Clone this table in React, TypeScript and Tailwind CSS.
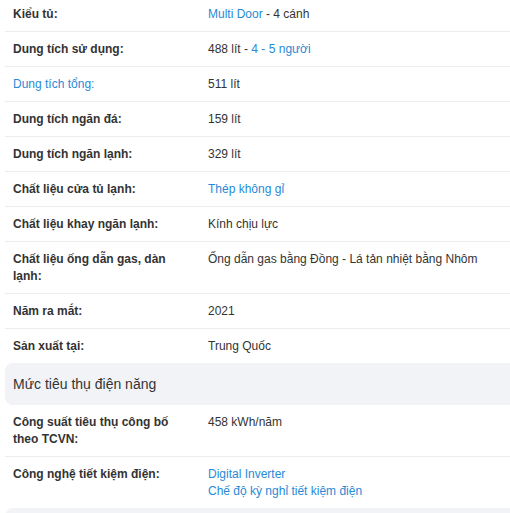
import React from "react";

type Part = { t: string; link?: boolean };
type Row = { label: string; labelLink?: boolean; value: Part[][] };

const rows1: Row[] = [
  { label: "Kiểu tủ:", value: [[{ t: "Multi Door", link: true }, { t: " - 4 cánh" }]] },
  { label: "Dung tích sử dụng:", value: [[{ t: "488 lít - " }, { t: "4 - 5 người", link: true }]] },
  { label: "Dung tích tổng:", labelLink: true, value: [[{ t: "511 lít" }]] },
  { label: "Dung tích ngăn đá:", value: [[{ t: "159 lít" }]] },
  { label: "Dung tích ngăn lạnh:", value: [[{ t: "329 lít" }]] },
  { label: "Chất liệu cửa tủ lạnh:", value: [[{ t: "Thép không gỉ", link: true }]] },
  { label: "Chất liệu khay ngăn lạnh:", value: [[{ t: "Kính chịu lực" }]] },
  { label: "Chất liệu ống dẫn gas, dàn lạnh:", value: [[{ t: "Ống dẫn gas bằng Đồng - Lá tản nhiệt bằng Nhôm" }]] },
  { label: "Năm ra mắt:", value: [[{ t: "2021" }]] },
  { label: "Sản xuất tại:", value: [[{ t: "Trung Quốc" }]] },
];

const rows2: Row[] = [
  { label: "Công suất tiêu thụ công bố theo TCVN:", value: [[{ t: "458 kWh/năm" }]] },
  {
    label: "Công nghệ tiết kiệm điện:",
    value: [[{ t: "Digital Inverter", link: true }], [{ t: "Chế độ kỳ nghỉ tiết kiệm điện", link: true }]],
  },
];

function SpecRow({ row, last }: { row: Row; last?: boolean }) {
  return (
    <div className={"flex pt-[9px] pb-[8px] leading-[17px] text-[12px] " + (last ? "" : "border-b border-[#ececec]")}>
      <div className={"w-[203px] shrink-0 pl-2 pr-[30px] " + (row.labelLink ? "text-[#288ad6]" : "font-bold text-[#333]")}>
        {row.label}
      </div>
      <div className="flex-1 text-[#333]">
        {row.value.map((line, i) => (
          <div key={i}>
            {line.map((p, j) => (
              <span key={j} className={p.link ? "text-[#288ad6]" : ""}>
                {p.t}
              </span>
            ))}
          </div>
        ))}
      </div>
    </div>
  );
}

export default function App() {
  return (
    <div className="w-[510px] h-[513px] overflow-hidden bg-white pl-[5px]" style={{ fontFamily: '"Liberation Sans", Arial, sans-serif' }}>
      <div className="w-[525px] mt-[-3px]">
        {rows1.map((r, i) => (
          <SpecRow key={i} row={r} last={i === rows1.length - 1} />
        ))}
        <div className="bg-[#f2f3f7] rounded-lg h-[42px] flex items-center pl-2 text-[14px] text-[#333]">
          Mức tiêu thụ điện năng
        </div>
        {rows2.map((r, i) => (
          <SpecRow key={i} row={r} last={i === rows2.length - 1} />
        ))}
        <div className="bg-[#f2f3f7] rounded-lg h-[42px]" />
      </div>
    </div>
  );
}
